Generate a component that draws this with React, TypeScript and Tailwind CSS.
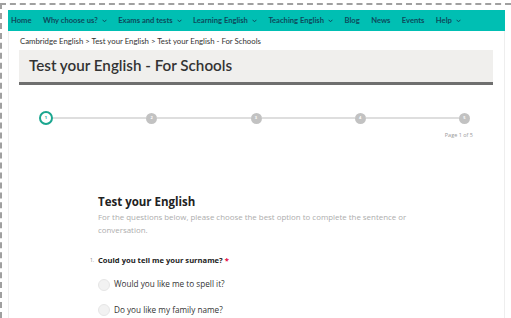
import React from "react";

const navItems: { label: string; caret?: boolean }[] = [
  { label: "Home" },
  { label: "Why choose us?", caret: true },
  { label: "Exams and tests", caret: true },
  { label: "Learning English", caret: true },
  { label: "Teaching English", caret: true },
  { label: "Blog" },
  { label: "News" },
  { label: "Events" },
  { label: "Help", caret: true },
];

function Caret() {
  return (
    <svg width="5" height="4" viewBox="0 0 5 4" className="ml-[4px] mt-[1px]">
      <path d="M0.6 0.8 L2.5 2.8 L4.4 0.8" fill="none" stroke="#0e4a5c" strokeWidth="1" />
    </svg>
  );
}

function Step({ n, active }: { n: number; active?: boolean }) {
  if (active) {
    return (
      <div className="w-[14px] h-[14px] shrink-0 rounded-full border-2 border-[#1aa68f] bg-white flex items-center justify-center">
        <span className="text-[4px] leading-none text-[#1aa68f] font-bold">{n}</span>
      </div>
    );
  }
  return (
    <div className="w-[11px] h-[11px] shrink-0 rounded-full bg-[#c2c2c2] flex items-center justify-center">
      <span className="text-[4px] leading-none text-white font-bold">{n}</span>
    </div>
  );
}

function Line() {
  return <div className="flex-1 h-[2px] bg-[#dedede]" />;
}

export default function App() {
  return (
    <div className="w-[511px] h-[318px] overflow-hidden bg-white" style={{ fontFamily: "'Open Sans', sans-serif" }}>
      <div className="mt-[3px] h-[315px] border-t-2 border-l-2 border-dashed border-[#a0a0a0] pl-[6px] pt-[5px]">
        <div className="w-[497px]">
          <nav
            className="h-[21px] bg-[#00bfb3] flex items-center pl-[3px] gap-[11.5px] text-[7.6px] font-bold text-[#0e4a5c]"
            style={{ fontFamily: "Lato, sans-serif" }}
          >
            {navItems.map((it) => (
              <div key={it.label} className="flex items-center whitespace-nowrap">
                <span>{it.label}</span>
                {it.caret && <Caret />}
              </div>
            ))}
          </nav>
          <div className="h-[290px] border-x border-[#eeeeee] px-[10px]">
            <div
              className="h-[19px] flex items-center pl-[1px] pt-[2px] text-[7.8px] text-[#333]"
              style={{ fontFamily: "Lato, sans-serif" }}
            >
              Cambridge English &gt; Test your English &gt; Test your English - For Schools
            </div>
            <div className="h-[35px] w-[474px] bg-[#f0efed] border-b-[3px] border-[#6f6f6f] flex items-center pl-[10px]">
              <h1 className="text-[15.2px] font-semibold text-[#333] leading-none" style={{ fontFamily: "Lato, sans-serif" }}>
                Test your English - For Schools
              </h1>
            </div>
            <div className="ml-[20px] w-[431px] mt-[26px]">
              <div className="flex items-center">
                <Step n={1} active />
                <Line />
                <Step n={2} />
                <Line />
                <Step n={3} />
                <Line />
                <Step n={4} />
                <Line />
                <Step n={5} />
              </div>
              <div className="flex justify-end mt-[8px] -mr-[3px] text-[5.5px] text-[#999] leading-none">Page 1 of 5</div>
            </div>
            <div className="ml-[79px] mt-[57px] w-[335px]">
              <h2 className="text-[11.5px] font-bold text-[#222] leading-none">Test your English</h2>
              <p className="mt-[4px] text-[7.9px] leading-[13px] text-[#adadad]">
                For the questions below, please choose the best option to complete the sentence or conversation.
              </p>
              <div className="mt-[18px] flex items-center -ml-[8px]">
                <span className="w-[8px] text-[5px] text-[#888]">1.</span>
                <span className="text-[7.6px] font-bold text-[#222]">
                  Could you tell me your surname? <span className="text-[#e4003b]">*</span>
                </span>
              </div>
              <div className="mt-[12px] flex items-center">
                <div className="w-[12px] h-[12px] rounded-full bg-[#f2f2f2] border border-[#e6e6e6]" />
                <span className="ml-[4px] text-[8.2px] text-[#333]">Would you like me to spell it?</span>
              </div>
              <div className="mt-[13px] flex items-center">
                <div className="w-[12px] h-[12px] rounded-full bg-[#f2f2f2] border border-[#e6e6e6]" />
                <span className="ml-[4px] text-[8.2px] text-[#333]">Do you like my family name?</span>
              </div>
            </div>
          </div>
        </div>
      </div>
    </div>
  );
}
